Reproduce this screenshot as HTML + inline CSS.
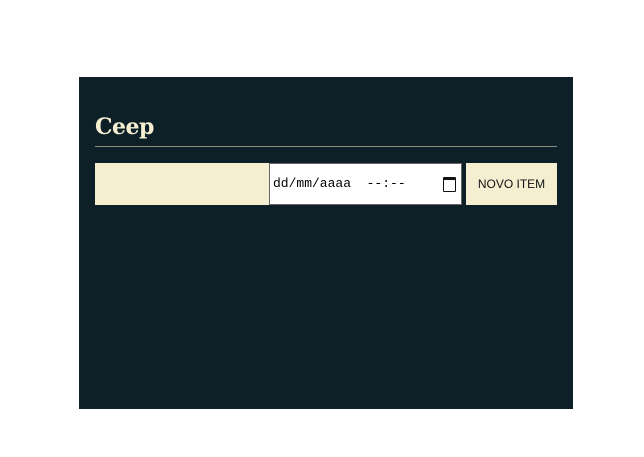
<!DOCTYPE html><html><head><style>
body{margin:0;width:644px;height:457px;background:#fff;position:relative;overflow:hidden}
.box{position:absolute;left:79px;top:77px;width:494px;height:332px;background:#0d2028}
h1{position:absolute;left:95px;top:114px;margin:0;font:bold 22px "DejaVu Serif","Liberation Serif",serif;color:#f5efd2;letter-spacing:-0.5px}
.line{position:absolute;left:95px;top:146px;width:462px;height:1px;background:#8a8f80}
.in{position:absolute;left:95px;top:163px;width:174px;height:42px;background:#f5efd2}
.dt{position:absolute;left:269px;top:163px;height:40px;background:#fff;border:1px solid #666;font:13px "Liberation Mono",monospace;color:#000;line-height:40px;padding-left:3px;width:188px;white-space:pre}
.cal{position:absolute;left:443px;top:177px;width:11px;height:11px;border:1.5px solid #111;border-top-width:3px;border-radius:1px}
.btn{position:absolute;left:466px;top:163px;width:91px;height:42px;background:#f5efd2;font:12px "Liberation Sans",sans-serif;color:#111;text-align:center;line-height:42px}
</style></head><body>
<div class="box"></div>
<h1>Ceep</h1>
<div class="line"></div>
<div class="in"></div>
<div class="dt">dd/mm/aaaa  --:--</div>
<div class="cal"></div>
<div class="btn">NOVO ITEM</div>
</body></html>
